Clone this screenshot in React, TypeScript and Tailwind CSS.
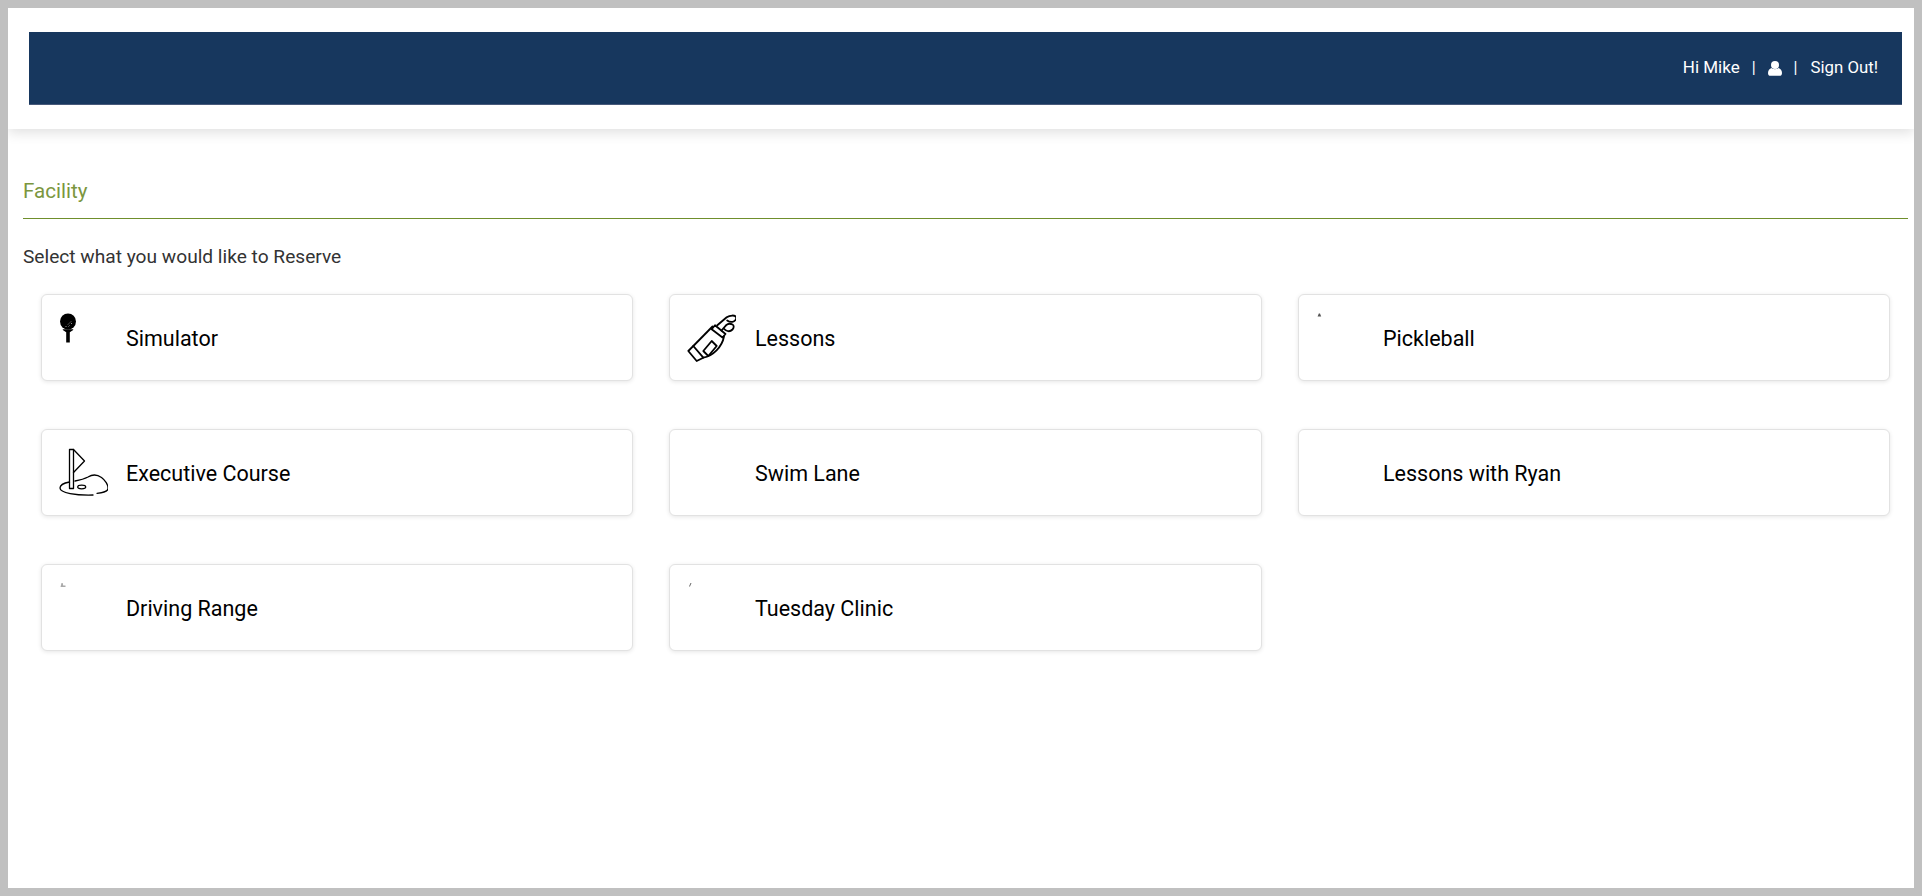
import React from "react";

const Tee = () => (
  <svg width="50" height="50" viewBox="0 0 50 50">
    <circle cx="10" cy="8.5" r="8" fill="#000" />
    <path d="M7.5 14l1-1M10 11.5l1-1M12 9.5l1-1M10.5 13.5l1-1M13 11l1-1" stroke="#bbb" strokeWidth="0.8" />
    <path d="M4.8 16.2h10.4v.8l-3.4 2.2V29.5H8.2V19.2L4.8 17z" fill="#000" />
  </svg>
);

const Bag = () => (
  <svg width="50" height="50" viewBox="0 0 50 50" fill="none" stroke="#000" strokeWidth="1.8" strokeLinejoin="round" strokeLinecap="round">
    <path d="M7.3 33L26.5 13.5" />
    <path d="M2.3 38L7.3 33L17.3 44.7L10.7 48Z" />
    <path d="M17.3 44.7C27 43 36 34 38 23.5" />
    <path d="M25.7 16.3L29 12.3L39.5 21L36.5 24.5Z" />
    <path d="M17.3 38L25.7 28L30.7 33L22.3 43Z" />
    <path d="M31.3 12.3L40.7 4.2C44 2 49 2 50 4C50.8 6 49 8.5 46.5 8.8C44.5 9 42.5 8.5 41.2 7.5" />
    <path d="M35.5 17.5L40 12.3C41.5 11 44.5 10.5 46.5 11.5C48.2 12.5 48 15 46.5 16.5C45 18 43 18.5 41.5 18C40 17.5 39 17 38.3 16" />
  </svg>
);

const Flag = () => (
  <svg width="50" height="50" viewBox="0 0 50 50" fill="none" stroke="#000" strokeWidth="1.3" strokeLinecap="round" strokeLinejoin="round">
    <path d="M11.5 1.5H15.5V40.5H11.5Z" />
    <path d="M15.5 1.5L26.5 13L15.5 24.5" />
    <path d="M11.5 34C6 35 2 37 2 40C2 45 18 47.5 35 47" />
    <path d="M17 33C22 32 26 31 30 29C34 26.5 38 25.5 43.5 29.5C47 32 50.5 37 50 41C49.5 43.5 44 44.8 39 45.3" />
    <ellipse cx="23.7" cy="39" rx="4" ry="1.8" />
  </svg>
);

const Speck = ({ d, color }: { d: string; color: string }) => (
  <svg width="50" height="50" viewBox="0 0 50 50">
    <path d={d} fill={color} />
  </svg>
);

const items: { label: string; icon?: React.ReactNode }[] = [
  { label: "Simulator", icon: <Tee /> },
  { label: "Lessons", icon: <Bag /> },
  { label: "Pickleball", icon: <Speck d="M3.8 .5h1.2l1.2 3h-3.6z" color="#555" /> },
  { label: "Executive Course", icon: <Flag /> },
  { label: "Swim Lane" },
  { label: "Lessons with Ryan" },
  { label: "Driving Range", icon: <Speck d="M3.5 0h1.2l.5 2.5h2.3V4H2.5z" color="#aaa" /> },
  { label: "Tuesday Clinic", icon: <Speck d="M4.5 0h1L4 3.5H3z" color="#666" /> },
];

export default function App() {
  return (
    <div className="h-[896px] border-[8px] border-[#c0c0c0] bg-white font-['Roboto',sans-serif] overflow-hidden">
      <header className="relative h-[121px] bg-white pl-[21px] pr-[12px] pt-[24px] shadow-[0_4px_12px_rgba(0,0,0,0.12)]">
        <div className="flex h-[73px] items-center justify-end border-b border-b-[#47597a] bg-[#17375e] pr-[24px] text-[17px] text-white">
          <span>Hi Mike</span>
          <span className="ml-[12px] text-[16px]">|</span>
          <svg className="ml-[12px]" width="14" height="15" viewBox="0 0 14 15" fill="#fff">
            <circle cx="7" cy="4" r="4" />
            <path d="M0 12C0 9.5 1.5 7.5 3.5 7C5 8.6 9 8.6 10.5 7C12.5 7.5 14 9.5 14 12C14 14 13 14.8 11.5 14.8H2.5C1 14.8 0 14 0 12Z" />
          </svg>
          <span className="ml-[12px] text-[16px]">|</span>
          <span className="ml-[13px] text-[16.8px]">Sign Out!</span>
        </div>
      </header>
      <main className="px-[15px]">
        <h1 className="mt-[48px] h-[41px] text-[20.6px] leading-[28px] text-[#7b963e]">Facility</h1>
        <div className="h-px w-[1885px] bg-[#6f8f2c]" />
        <p className="mt-[26px] text-[19.15px] leading-[24px] text-[#333]">Select what you would like to Reserve</p>
        <div className="mt-[25px] grid w-[1885px] grid-cols-[592px_593px_592px] gap-x-[36px] gap-y-[48px] px-[18px]">
          {items.map((it, i) => (
            <div
              key={it.label}
              className="flex h-[87px] items-center rounded-[6px] border border-[#e2e2e2] bg-white pl-[16px] shadow-[0_1px_4px_rgba(0,0,0,0.1)]"
            >
              <div className={i % 3 === 1 ? "mr-[19px] h-[50px] w-[50px] shrink-0" : "mr-[18px] h-[50px] w-[50px] shrink-0"}>{it.icon}</div>
              <span className="pt-[3px] text-[21.5px] text-black">{it.label}</span>
            </div>
          ))}
        </div>
      </main>
    </div>
  );
}
